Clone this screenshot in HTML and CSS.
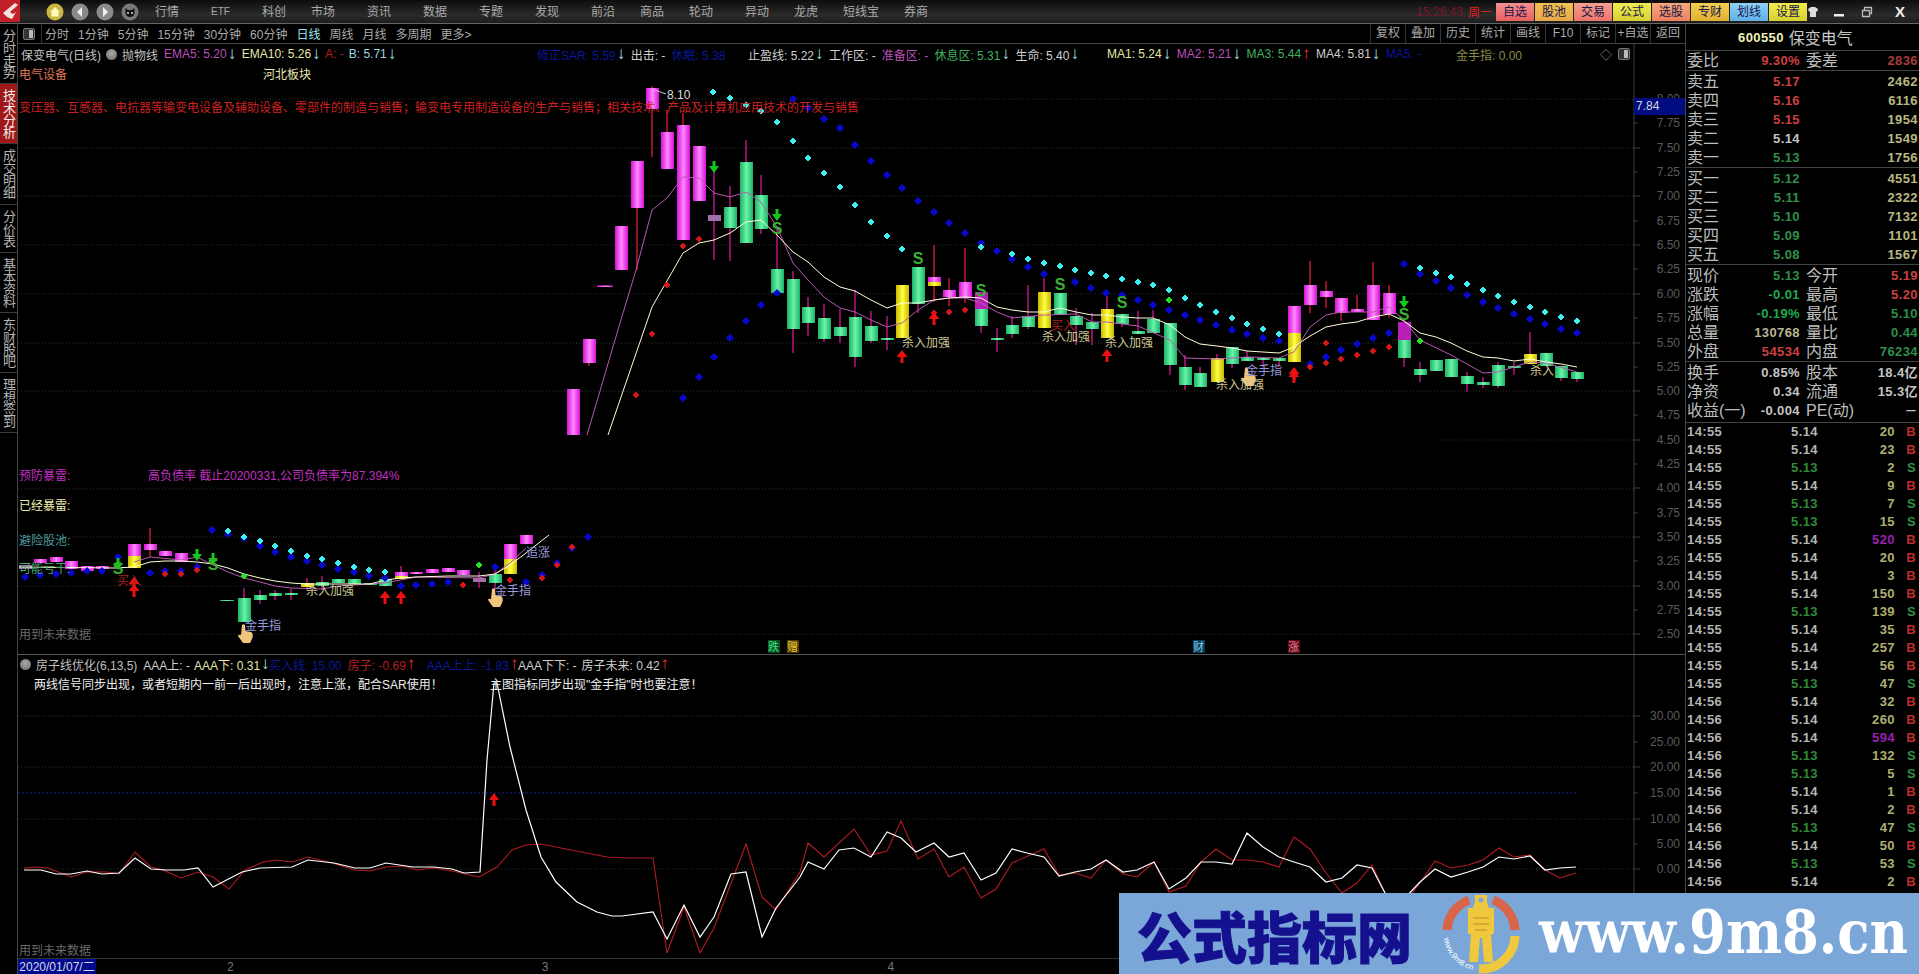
FILE: index.html
```html
<!DOCTYPE html>
<html lang="zh-CN">
<head>
<meta charset="utf-8">
<title>保变电气 日线</title>
<link rel="stylesheet" href="styles.css">
</head>
<body>
<div class="app">
  <header class="topbar">
    <svg class="logo" viewBox="0 0 20 22" width="20" height="22"><rect width="20" height="22" fill="#c4202a"/><path d="M3 13 L15 3 L18 5 L10 12 L13 14 L16 12 L12 19 L7 17 Z" fill="#f4e4e0"/></svg>
    <div class="navbtns">
      <svg viewBox="0 0 18 18" width="18" height="18"><circle cx="9" cy="9" r="8.5" fill="#c8b840"/><path d="M9 4 L14 9 H12.5 V13.500 H5.500 V9 H4 Z" fill="#fff8c0"/></svg>
      <svg viewBox="0 0 18 18" width="18" height="18"><circle cx="9" cy="9" r="8.500" fill="#8a8a8a"/><path d="M11 4 L6 9 L11 14 Z" fill="#f0f0f0"/></svg>
      <svg viewBox="0 0 18 18" width="18" height="18"><circle cx="9" cy="9" r="8.500" fill="#8a8a8a"/><path d="M7 4 L12 9 L7 14 Z" fill="#f0f0f0"/></svg>
      <svg viewBox="0 0 18 18" width="18" height="18"><circle cx="9" cy="9" r="8.500" fill="#7a7a7a"/><path d="M4.500 5 L7 7 H11 L13.500 5 V10 Q13 14 9 14 Q5 14 4.500 10 Z" fill="#111"/><circle cx="7" cy="10" r="1" fill="#ddd"/><circle cx="11" cy="10" r="1" fill="#ddd"/></svg>
    </div>
    <nav class="menu">
      <span class="mi">行情</span><span class="mi etf wide">ETF</span><span class="mi wide">科创</span><span class="mi">市场</span><span class="mi wide">资讯</span><span class="mi wide">数据</span><span class="mi wide">专题</span><span class="mi wide">发现</span><span class="mi wide">前沿</span><span class="mi">商品</span><span class="mi">轮动</span><span class="mi wide">异动</span><span class="mi">龙虎</span><span class="mi">短线宝</span><span class="mi">券商</span>
    </nav>
    <div class="topright">
      <span class="clock">15:26:43</span><span class="week">周一</span>
      <div class="qbtns">
        <span class="qb q1">自选</span><span class="qb q2">股池</span><span class="qb q3">交易</span><span class="qb q4">公式</span><span class="qb q5">选股</span><span class="qb q6">专财</span><span class="qb q7">划线</span><span class="qb q4">设置</span>
      </div>
      <div class="winbtns">
        <svg viewBox="0 0 12 12" width="12" height="12"><path d="M1 3 L4 1 H8 L11 3 L10 6 L9 5 V11 H3 V5 L2 6 Z" fill="#ddd"/></svg>
        <svg class="wmin" viewBox="0 0 12 12" width="12" height="12"><rect x="1" y="8" width="10" height="2.500" fill="#eee"/></svg>
        <svg viewBox="0 0 12 12" width="12" height="12"><path d="M1.500 4.500 H8.500 V10.500 H1.500 Z M3.500 4.500 V1.500 H10.500 V7.500 H8.500" fill="none" stroke="#bbb" stroke-width="1.300"/></svg>
        <span class="xbtn">X</span>
      </div>
    </div>
  </header>

  <div class="main">
    <aside class="sidetabs">
      <div class="vtab">分时走势</div>
      <div class="vtab on">技术分析</div>
      <div class="vtab">成交明细</div>
      <div class="vtab">分价表</div>
      <div class="vtab">基本资料</div>
      <div class="vtab">东财股吧</div>
      <div class="vtab">理想签到</div>
    </aside>

    <section class="center">
      <div class="periodbar">
        <svg class="panelicon" viewBox="0 0 12 12" width="12" height="12"><rect x=".5" y=".5" width="11" height="11" rx="1.500" fill="#333" stroke="#777"/><rect x="6" y="2" width="4" height="8" fill="#bbb"/></svg>
        <div class="ptabs">
          <span>分时</span><span>1分钟</span><span>5分钟</span><span>15分钟</span><span>30分钟</span><span>60分钟</span><span class="cur">日线</span><span>周线</span><span>月线</span><span>多周期</span><span>更多&gt;</span>
        </div>
        <div class="tools">
          <span>复权</span><span>叠加</span><span>历史</span><span>统计</span><span>画线</span><span>F10</span><span>标记</span><span>+自选</span><span>返回</span>
        </div>
      </div>

      <div class="pane pane-main">
        <svg class="canvas" viewBox="18 44 1667 610" width="1667" height="610">
          <defs>
            <linearGradient id="gu"><stop offset="0" stop-color="#d810d8"/><stop offset=".5" stop-color="#ff88ff"/><stop offset="1" stop-color="#d810d8"/></linearGradient>
            <linearGradient id="gd"><stop offset="0" stop-color="#1cb468"/><stop offset=".5" stop-color="#68f4a8"/><stop offset="1" stop-color="#1cb468"/></linearGradient>
            <linearGradient id="gy"><stop offset="0" stop-color="#c8b800"/><stop offset=".5" stop-color="#ffff40"/><stop offset="1" stop-color="#c8b800"/></linearGradient>
            <path id="adown" d="M-1.500 -7 V-2 H-5 L0 5 L5 -2 H1.500 V-7 Z"/>
            <path id="aup" d="M-1.500 7 V1 H-5.500 L0 -6 L5.500 1 H1.500 V7 Z"/>
            <path id="hand" d="M-3 -9 Q-1.500 -10.500 0 -9 L.5 -3 L6 -2 Q9 0 7 5 L5 9 H-2 L-7 2 Q-7 0 -4 1 Z"/>
          </defs>
          <g class="grid">
            <path d="M18 99H1634M18 148H1634M18 196H1634M18 245H1634M18 294H1634M18 343H1634M18 391H1634M1440 440H1634M18 489H1634M18 537H1634M18 586H1634M18 634H1634"/>
          </g>
          <path class="axisline" d="M1634 44V654M1634 99h6M1634 123h4M1634 148h6M1634 172h4M1634 196h6M1634 221h4M1634 245h6M1634 269h4M1634 294h6M1634 318h4M1634 343h6M1634 367h4M1634 391h6M1634 415h4M1634 440h6M1634 464h4M1634 488h6M1634 513h4M1634 537h6M1634 561h4M1634 586h6M1634 610h4M1634 634h6"/>
          <g class="axtext">
            <text x="1680" y="103">8.00</text><text x="1680" y="127">7.75</text><text x="1680" y="152">7.50</text><text x="1680" y="176">7.25</text><text x="1680" y="200">7.00</text><text x="1680" y="225">6.75</text><text x="1680" y="249">6.50</text><text x="1680" y="273">6.25</text><text x="1680" y="298">6.00</text><text x="1680" y="322">5.75</text><text x="1680" y="347">5.50</text><text x="1680" y="371">5.25</text><text x="1680" y="395">5.00</text><text x="1680" y="419">4.75</text><text x="1680" y="444">4.50</text><text x="1680" y="468">4.25</text><text x="1680" y="492">4.00</text><text x="1680" y="517">3.75</text><text x="1680" y="541">3.50</text><text x="1680" y="565">3.25</text><text x="1680" y="590">3.00</text><text x="1680" y="614">2.75</text><text x="1680" y="638">2.50</text>
          </g>

          <path class="wick-up" d="M589 339V366M637 208V270M652 86V157M667 110V132M683 113V125M934 245V302M949 278V306M965 248V303M1310 261V313M1326 281V308M1341 298V321M1357 295V309M1373 262V285M1389 285V318M150 528V557"/>
          <path class="wick-dn" d="M714 167V260M730 186V261M746 140V162M761 175V234M777 227V269M793 271V353M808 297V336M824 304V342M840 309V343M855 290V367M871 311V343M887 316V350M918 304V313M981 333V292M997 328V352M1012 316V338M1028 285V329M1044 278V292M1076 308V345M1092 313V345M1107 296V309M1122 324V327M1138 311V334M1153 310V319M1170 365V375M1185 355V390M1200 367V373M1217 354V358M1232 364V368M1247 351V357M1263 360V367M1279 361V367M1404 358V367M1420 362V382M1467 372V392M1483 377V388M1498 362V388M1514 362V375M1530 332V354M1561 378V381M1577 379V382M244 588V622M260 590V604M275 590V600M291 589V600M307 578V590M479 572V588M495 570V590M322 576V590M401 566V572"/>

          <g fill="url(#gu)">
            <rect x="567" y="389" width="13" height="46"/><rect x="583" y="339" width="13" height="24"/><rect x="597" y="285.500" width="16" height="1.500"/><rect x="615" y="226" width="13" height="44"/><rect x="631" y="161" width="13" height="47"/><rect x="646" y="88" width="13" height="21"/><rect x="661" y="132" width="13" height="37"/><rect x="677" y="125" width="13" height="115"/><rect x="693" y="146" width="13" height="55"/><rect x="928" y="277" width="13" height="5"/><rect x="943" y="290" width="13" height="7"/><rect x="959" y="282" width="13" height="16"/><rect x="1288" y="306" width="13" height="27"/><rect x="1304" y="285" width="13" height="20"/><rect x="1320" y="291" width="13" height="6"/><rect x="1335" y="298" width="13" height="15"/><rect x="1351" y="309" width="13" height="3"/><rect x="1367" y="285" width="13" height="35"/><rect x="1383" y="293" width="13" height="21"/>
            <rect x="34" y="559" width="13" height="4"/><rect x="50" y="557" width="13" height="5"/><rect x="65" y="561" width="13" height="8"/><rect x="81" y="566" width="13" height="5"/><rect x="96" y="566" width="13" height="3"/><rect x="128" y="544" width="13" height="12"/><rect x="144" y="544" width="13" height="6"/><rect x="159" y="551" width="13" height="5"/><rect x="175" y="553" width="13" height="9"/><rect x="395" y="572" width="13" height="4"/><rect x="410" y="572" width="13" height="2"/><rect x="426" y="569" width="13" height="4"/><rect x="442" y="568" width="13" height="4"/><rect x="457" y="570" width="13" height="5"/><rect x="504" y="544" width="13" height="15"/><rect x="520" y="535" width="13" height="9"/>
          </g>
          <g class="purple-body">
            <rect x="975" y="292" width="13" height="17"/><rect x="1398" y="322" width="13" height="18"/>
          </g>
          <g fill="url(#gd)">
            <rect x="724" y="207" width="13" height="21"/><rect x="740" y="162" width="13" height="81"/><rect x="755" y="195" width="13" height="34"/><rect x="771" y="269" width="13" height="24"/><rect x="787" y="279" width="13" height="50"/><rect x="802" y="307" width="13" height="16"/><rect x="818" y="318" width="13" height="21"/><rect x="834" y="327" width="13" height="9"/><rect x="849" y="317" width="13" height="40"/><rect x="865" y="326" width="13" height="15"/><rect x="881" y="338" width="13" height="2"/><rect x="912" y="267" width="13" height="37"/><rect x="975" y="309" width="13" height="17"/><rect x="991" y="338" width="13" height="2"/><rect x="1006" y="325" width="13" height="9"/><rect x="1022" y="316" width="13" height="11"/><rect x="1054" y="293" width="13" height="22"/><rect x="1070" y="316" width="13" height="9"/><rect x="1086" y="322" width="13" height="7"/><rect x="1116" y="314" width="13" height="10"/><rect x="1132" y="331" width="13" height="3"/><rect x="1147" y="319" width="13" height="14"/><rect x="1164" y="323" width="13" height="42"/><rect x="1179" y="367" width="13" height="18"/><rect x="1194" y="373" width="13" height="14"/><rect x="1226" y="347" width="13" height="17"/><rect x="1241" y="357" width="13" height="4"/><rect x="1257" y="358" width="13" height="2"/><rect x="1273" y="358" width="13" height="3"/><rect x="1398" y="340" width="13" height="18"/><rect x="1414" y="369" width="13" height="6"/><rect x="1430" y="360" width="13" height="11"/><rect x="1445" y="359" width="13" height="18"/><rect x="1461" y="376" width="13" height="8"/><rect x="1477" y="382" width="13" height="3"/><rect x="1492" y="365" width="13" height="21"/><rect x="1508" y="366" width="13" height="2"/><rect x="1540" y="353" width="13" height="13"/><rect x="1555" y="366" width="13" height="12"/><rect x="1571" y="372" width="13" height="7"/>
            <rect x="238" y="598" width="13" height="24"/><rect x="254" y="595" width="13" height="5"/><rect x="269" y="593" width="13" height="3"/><rect x="285" y="593" width="13" height="2"/><rect x="220" y="600" width="14" height="1"/><rect x="316" y="582" width="13" height="4"/><rect x="332" y="579" width="13" height="4"/><rect x="348" y="579" width="13" height="5"/><rect x="364" y="583" width="13" height="2"/><rect x="379" y="579" width="13" height="7"/><rect x="489" y="574" width="13" height="9"/>
          </g>
          <g fill="url(#gy)">
            <rect x="896" y="285" width="13" height="53"/><rect x="1038" y="292" width="13" height="36"/><rect x="1101" y="309" width="13" height="29"/><rect x="1211" y="358" width="13" height="24"/><rect x="1288" y="333" width="13" height="29"/><rect x="1524" y="354" width="13" height="10"/><rect x="128" y="556" width="13" height="12"/><rect x="504" y="559" width="13" height="15"/><rect x="301" y="583" width="13" height="4"/><rect x="928" y="282" width="13" height="4"/><rect x="395" y="576" width="13" height="3"/>
          </g>
          <g class="gray-body">
            <rect x="708" y="215" width="13" height="6"/><rect x="473" y="578" width="13" height="4"/><rect x="19" y="565" width="13" height="4"/>
          </g>

          <polyline class="ma-pink" points="587,435 620,323 636,270 652,210 667,198 683,177 699,178 714,193 730,197 746,192 761,202 777,227 793,263 808,280 824,297 840,308 855,312 871,320 887,327 902,323 918,310 934,300 949,298 965,298 981,303 997,312 1012,318 1044,315 1076,314 1092,322 1107,322 1138,326 1170,340 1185,358 1217,359 1247,357 1279,358 1294,352 1310,327 1326,315 1341,312 1373,312 1389,307 1404,320 1420,340 1451,355 1483,373 1498,372 1514,367 1530,362 1546,363 1577,372"/>
          <polyline class="ma-white" points="608,435 620,400 652,307 683,253 699,243 714,240 730,233 746,222 761,220 777,235 793,252 808,262 824,277 840,287 855,291 871,300 887,308 902,303 918,303 934,300 949,298 965,297 981,298 997,307 1012,310 1028,312 1044,312 1060,308 1076,312 1092,315 1107,315 1122,317 1138,318 1153,318 1170,325 1185,337 1200,344 1217,346 1232,348 1247,351 1263,352 1279,353 1294,347 1301,342 1310,336 1326,327 1341,324 1357,322 1373,317 1389,314 1404,321 1420,333 1436,337 1451,343 1467,351 1483,357 1498,358 1514,361 1530,359 1546,362 1561,364 1577,367"/>
          <polyline class="ma-pink" points="134,562 150,557 181,560 197,557 213,565 228,572 244,578 260,582 275,586 291,588 322,589 338,586 385,583 416,577 479,578 495,574 510,563 526,548"/>
          <polyline class="ma-white" points="19,567 115,568 134,567 150,562 165,561 181,561 197,562 213,564 228,568 244,574 260,578 275,581 291,583 307,584 338,584 370,584 385,580 401,578 416,577 448,576 479,576 495,574 510,565 526,553 549,535"/>

          <g class="dot-blue">
            <path d="M683 395l3 3-3 3-3-3zM699 374l3 3-3 3-3-3zM714 354l3 3-3 3-3-3zM730 335l3 3-3 3-3-3zM746 318l3 3-3 3-3-3zM761 302l3 3-3 3-3-3zM777 290l3 3-3 3-3-3zM793 96l3 3-3 3-3-3zM808 105l3 3-3 3-3-3zM824 116l3 3-3 3-3-3zM840 125l3 3-3 3-3-3zM855 142l3 3-3 3-3-3zM871 158l3 3-3 3-3-3zM887 172l3 3-3 3-3-3zM902 185l3 3-3 3-3-3zM918 198l3 3-3 3-3-3zM934 209l3 3-3 3-3-3zM949 220l3 3-3 3-3-3zM965 230l3 3-3 3-3-3zM981 240l3 3-3 3-3-3zM997 248l3 3-3 3-3-3zM1012 256l3 3-3 3-3-3zM1028 264l3 3-3 3-3-3zM1044 271l3 3-3 3-3-3zM1075 279l3 3-3 3-3-3zM1091 285l3 3-3 3-3-3zM1106 290l3 3-3 3-3-3zM1122 292l3 3-3 3-3-3zM1138 297l3 3-3 3-3-3zM1153 302l3 3-3 3-3-3zM1169 307l3 3-3 3-3-3zM1185 312l3 3-3 3-3-3zM1200 317l3 3-3 3-3-3zM1216 322l3 3-3 3-3-3zM1232 327l3 3-3 3-3-3zM1247 331l3 3-3 3-3-3zM1263 335l3 3-3 3-3-3zM1279 338l3 3-3 3-3-3zM1310 361l3 3-3 3-3-3zM1326 354l3 3-3 3-3-3zM1341 347l3 3-3 3-3-3zM1357 341l3 3-3 3-3-3zM1373 335l3 3-3 3-3-3zM1389 330l3 3-3 3-3-3zM1404 261l3 3-3 3-3-3zM1420 271l3 3-3 3-3-3zM1436 278l3 3-3 3-3-3zM1451 285l3 3-3 3-3-3zM1467 292l3 3-3 3-3-3zM1483 299l3 3-3 3-3-3zM1498 305l3 3-3 3-3-3zM1514 311l3 3-3 3-3-3zM1530 316l3 3-3 3-3-3zM1545 321l3 3-3 3-3-3zM1561 326l3 3-3 3-3-3zM1577 330l3 3-3 3-3-3z"/>
            <path d="M25 574l3 3-3 3-3-3zM40 572l3 3-3 3-3-3zM56 571l3 3-3 3-3-3zM71 570l3 3-3 3-3-3zM87 568l3 3-3 3-3-3zM102 568l3 3-3 3-3-3zM118 554l3 3-3 3-3-3zM150 570l3 3-3 3-3-3zM165 568l3 3-3 3-3-3zM181 568l3 3-3 3-3-3zM197 564l3 3-3 3-3-3zM212 527l3 3-3 3-3-3zM228 531l3 3-3 3-3-3zM244 535l3 3-3 3-3-3zM260 543l3 3-3 3-3-3zM275 549l3 3-3 3-3-3zM291 554l3 3-3 3-3-3zM307 558l3 3-3 3-3-3zM322 562l3 3-3 3-3-3zM338 566l3 3-3 3-3-3zM354 569l3 3-3 3-3-3zM369 573l3 3-3 3-3-3zM385 575l3 3-3 3-3-3zM401 583l3 3-3 3-3-3zM416 582l3 3-3 3-3-3zM432 581l3 3-3 3-3-3zM448 579l3 3-3 3-3-3zM495 564l3 3-3 3-3-3zM526 579l3 3-3 3-3-3zM542 572l3 3-3 3-3-3zM557 560l3 3-3 3-3-3zM572 545l3 3-3 3-3-3zM588 534l3 3-3 3-3-3z"/>
          </g>
          <path class="dot-cyan" d="M713 89l3 3-3 3-3-3zM730 95l3 3-3 3-3-3zM746 102l3 3-3 3-3-3zM761 108l3 3-3 3-3-3zM777 119l3 3-3 3-3-3zM793 138l3 3-3 3-3-3zM808 155l3 3-3 3-3-3zM824 170l3 3-3 3-3-3zM840 184l3 3-3 3-3-3zM855 202l3 3-3 3-3-3zM871 219l3 3-3 3-3-3zM887 233l3 3-3 3-3-3zM902 246l3 3-3 3-3-3zM981 244l3 3-3 3-3-3zM1012 251l3 3-3 3-3-3zM1028 256l3 3-3 3-3-3zM1044 260l3 3-3 3-3-3zM1060 263l3 3-3 3-3-3zM1075 267l3 3-3 3-3-3zM1091 270l3 3-3 3-3-3zM1106 273l3 3-3 3-3-3zM1122 276l3 3-3 3-3-3zM1138 279l3 3-3 3-3-3zM1153 282l3 3-3 3-3-3zM1169 287l3 3-3 3-3-3zM1185 295l3 3-3 3-3-3zM1200 302l3 3-3 3-3-3zM1216 309l3 3-3 3-3-3zM1232 315l3 3-3 3-3-3zM1247 321l3 3-3 3-3-3zM1263 326l3 3-3 3-3-3zM1279 331l3 3-3 3-3-3zM1420 265l3 3-3 3-3-3zM1436 270l3 3-3 3-3-3zM1451 274l3 3-3 3-3-3zM1467 281l3 3-3 3-3-3zM1483 287l3 3-3 3-3-3zM1498 293l3 3-3 3-3-3zM1514 299l3 3-3 3-3-3zM1530 304l3 3-3 3-3-3zM1545 309l3 3-3 3-3-3zM1561 314l3 3-3 3-3-3zM1577 318l3 3-3 3-3-3zM228 528l3 3-3 3-3-3zM244 534l3 3-3 3-3-3zM260 538l3 3-3 3-3-3zM275 543l3 3-3 3-3-3zM291 548l3 3-3 3-3-3zM307 553l3 3-3 3-3-3zM322 556l3 3-3 3-3-3zM338 560l3 3-3 3-3-3zM354 564l3 3-3 3-3-3zM369 567l3 3-3 3-3-3zM385 569l3 3-3 3-3-3z"/>
          <path class="dot-red" d="M636 392l3 3-3 3-3-3zM652 331l3 3-3 3-3-3zM667 282l3 3-3 3-3-3zM683 243l3 3-3 3-3-3zM699 236l3 3-3 3-3-3zM934 310l3 3-3 3-3-3zM949 309l3 3-3 3-3-3zM965 307l3 3-3 3-3-3zM1310 364l3 3-3 3-3-3zM1326 360l3 3-3 3-3-3zM1341 356l3 3-3 3-3-3zM1357 352l3 3-3 3-3-3zM1373 348l3 3-3 3-3-3zM1389 344l3 3-3 3-3-3zM1326 340l3 3-3 3-3-3zM165 571l3 3-3 3-3-3zM181 571l3 3-3 3-3-3zM197 567l3 3-3 3-3-3zM463 582l3 3-3 3-3-3zM510 577l3 3-3 3-3-3zM542 575l3 3-3 3-3-3zM557 562l3 3-3 3-3-3zM572 544l3 3-3 3-3-3z"/>
          <path class="dot-green" d="M1169 297l3 3-3 3-3-3zM1420 338l3 3-3 3-3-3zM244 573l3 3-3 3-3-3zM479 562l3 3-3 3-3-3z"/>

          <g class="arrow-green">
            <use href="#adown" x="714" y="168"/><use href="#adown" x="777" y="216"/><use href="#adown" x="1404" y="303"/><use href="#adown" x="197" y="556"/><use href="#adown" x="213" y="560"/><use href="#adown" x="118" y="565"/>
          </g>
          <g class="arrow-red">
            <use href="#aup" x="902" y="356"/><use href="#aup" x="934" y="318"/><use href="#aup" x="1107" y="355"/><use href="#aup" x="1294" y="373"/><use href="#aup" x="1294" y="376"/><use href="#aup" x="134" y="583"/><use href="#aup" x="134" y="590"/><use href="#aup" x="385" y="597"/><use href="#aup" x="401" y="597"/>
          </g>
          <g class="sig-s">
            <text x="777" y="234">S</text><text x="918" y="264">S</text><text x="981" y="296">S</text><text x="1060" y="290">S</text><text x="1122" y="308">S</text><text x="1404" y="320">S</text><text x="118" y="574">S</text><text x="213" y="570">S</text>
          </g>
          <g class="hand-ico">
            <use href="#hand" x="245" y="634"/><use href="#hand" x="495" y="598"/><use href="#hand" x="1248" y="377"/>
          </g>

          <text class="peak" x="667" y="99">8.10</text>
          <path class="peakline" d="M655 90L666 94"/>
          <g class="tag-sell">
            <text x="902" y="347">杀入加强</text><text x="1105" y="347">杀入加强</text><text x="1216" y="389">杀入加强</text><text x="1042" y="341">杀入加强</text><text x="306" y="595">杀入加强</text><text x="1530" y="375">杀入</text>
          </g>
          <g class="tag-gold">
            <text x="1246" y="375">金手指</text><text x="495" y="595">金手指</text><text x="245" y="630">金手指</text><text x="526" y="557">追涨</text>
          </g>
          <text class="tag-buy" x="117" y="585">买入</text>
          <text class="tag-buy" x="1051" y="330">买入</text>

          <text class="lbl-purple" x="19" y="480">预防暴雷:</text>
          <text class="lbl-purple" x="148" y="480">高负债率 截止20200331,公司负债率为87.394%</text>
          <text class="lbl-yellow" x="19" y="510">已经暴雷:</text>
          <text class="lbl-teal" x="19" y="545">避险股池:</text>
          <text class="lbl-teal2" x="19" y="573">可能亏干:</text>
          <text class="lbl-gray" x="19" y="639">用到未来数据</text>

          <rect class="mk" x="768" y="640" width="12" height="13" fill="#0a4a20"/><text class="mk-t g" x="768" y="651">跌</text>
          <rect class="mk" x="787" y="640" width="12" height="13" fill="#4a3a00"/><text class="mk-t y" x="787" y="651">赠</text>
          <rect class="mk" x="1193" y="640" width="12" height="13" fill="#0a3a5a"/><text class="mk-t b" x="1193" y="651">财</text>
          <rect class="mk" x="1288" y="640" width="12" height="13" fill="#5a0a1a"/><text class="mk-t r" x="1288" y="651">涨</text>
        </svg>

        <div class="pricetag">7.84</div>

        <div class="inforow">
          <div class="seg seg-a">
            <span class="it title">保变电气(日线)</span><i class="dotbtn"></i><span class="it title">抛物线</span>
            <span class="it c-pur ml6">EMA5: 5.20</span><b class="dn">↓</b>
            <span class="it c-yel ml6">EMA10: 5.26</span><b class="dn">↓</b>
            <span class="it c-red ml5">A: -</span>
            <span class="it c-cya ml5">B: 5.71</span><b class="dn">↓</b>
          </div>
          <div class="seg seg-b">
            <span class="it c-blu">修正SAR: 5.59</span><b class="dn">↓</b>
            <span class="it c-whi ml6">出击: -</span>
            <span class="it c-blu ml6">休眠: 5.38</span>
          </div>
          <div class="seg seg-c">
            <span class="it c-whi">止盈线: 5.22</span><b class="dn">↓</b>
            <span class="it c-whi ml6">工作区: -</span>
            <span class="it c-pur ml6">准备区: -</span>
            <span class="it c-grn ml6">休息区: 5.31</span><b class="dn">↓</b>
            <span class="it c-whi ml6">生命: 5.40</span><b class="dn">↓</b>
          </div>
          <div class="seg seg-d">
            <span class="it c-yel">MA1: 5.24</span><b class="dn">↓</b>
            <span class="it c-pur ml6">MA2: 5.21</span><b class="dn">↓</b>
            <span class="it c-grn ml6">MA3: 5.44</span><b class="up">↑</b>
            <span class="it c-whi ml6">MA4: 5.81</span><b class="dn">↓</b>
            <span class="it c-blu ml6">MA5: -</span>
          </div>
          <div class="seg seg-e">
            <span class="it c-kha">金手指: 0.00</span>
          </div>
          <div class="seg seg-f">
            <span class="diamond">◇</span>
            <svg viewBox="0 0 12 12" width="12" height="12"><rect x=".5" y=".5" width="11" height="11" rx="1.500" fill="#333" stroke="#777"/><rect x="6" y="2" width="4" height="8" fill="#bbb"/></svg>
          </div>
        </div>
        <div class="textrow">
          <span class="sector">电气设备</span><span class="region">河北板块</span>
        </div>
        <div class="bizline">变压器、互感器、电抗器等输变电设备及辅助设备、零部件的制造与销售；输变电专用制造设备的生产与销售；相关技术、产品及计算机应用技术的开发与销售</div>
      </div>

      <div class="pane pane-sub">
        <svg class="canvas" viewBox="18 655 1667 303" width="1667" height="303">
          <g class="grid"><path d="M18 716H1634M18 767H1634M18 819H1634M18 869H1634"/></g>
          <path class="blue-dots" d="M18 793H1576"/>
          <path class="axisline" d="M1634 655V958M1634 716h6M1634 742h4M1634 767h6M1634 793h4M1634 819h6M1634 844h4M1634 869h6"/>
          <g class="axtext">
            <text x="1680" y="720">30.00</text><text x="1680" y="746">25.00</text><text x="1680" y="771">20.00</text><text x="1680" y="797">15.00</text><text x="1680" y="823">10.00</text><text x="1680" y="848">5.00</text><text x="1680" y="873">0.00</text>
          </g>
          <polyline class="ln-red" points="24,868 36,867 48,868 71,877 87,872 107,872 119,874 135,852 151,867 163,870 181,878 198,872 213,877 229,889 245,870 263,862 276,860 292,862 308,857 332,863 355,870 370,871 386,867 403,866 417,870 434,868 452,871 479,877 497,867 512,850 526,845 541,844 566,849 607,857 628,858 653,858 667,953 684,907 700,953 714,928 746,844 762,897 776,910 800,872 808,843 824,857 854,829 871,855 887,851 901,821 918,859 934,849 949,877 964,867 981,898 996,889 1012,863 1044,849 1059,875 1075,873 1091,878 1106,860 1123,874 1137,877 1154,862 1169,892 1186,886 1201,862 1216,849 1232,860 1247,860 1263,862 1279,867 1294,837 1310,849 1326,873 1342,893 1357,883 1372,865 1386,895 1403,905 1420,883 1435,861 1451,868 1468,865 1483,860 1499,848 1514,857 1530,855 1545,870 1560,878 1576,873"/>
          <polyline class="ln-white" points="24,870 41,870 56,874 71,874 87,871 102,874 119,873 135,858 151,869 166,870 184,870 198,868 213,887 242,872 260,868 292,867 308,860 334,863 355,868 370,868 386,863 413,867 434,867 452,869 464,873 480,872 487,760 494,683 497,683 510,747 526,810 541,857 556,882 577,902 597,912 612,916 622,916 653,912 667,939 684,905 700,937 714,917 731,874 746,872 762,937 776,908 800,877 808,862 824,869 839,850 854,848 871,857 887,832 901,838 916,852 934,843 949,857 964,853 981,880 996,873 1012,849 1027,853 1044,857 1059,876 1075,872 1091,869 1106,860 1123,872 1137,870 1154,862 1169,889 1186,878 1201,862 1216,862 1232,864 1247,833 1263,847 1279,857 1294,862 1310,867 1326,882 1342,878 1357,865 1372,868 1386,895 1403,900 1420,882 1435,869 1451,877 1468,872 1483,867 1499,857 1514,859 1530,856 1545,870 1560,868 1576,867"/>
          <g class="arrow-red"><path d="M494 793 L499 800 H495.500 V806 H492.500 V800 H489 Z"/></g>
          <text class="lbl-gray" x="19" y="955">用到未来数据</text>
        </svg>
        <div class="inforow sub">
          <i class="dotbtn first"></i><span class="it title">房子线优化(6,13,5)</span>
          <span class="it c-whi ml6">AAA上: -</span>
          <span class="it c-yel ml4">AAA下: 0.31</span><b class="dn">↓</b>
          <span class="it c-blu ml0">买入线: 15.00</span>
          <span class="it c-red ml6">房子: -0.69</span><b class="up">↑</b>
          <span class="it c-blu ml12">AAA上上: -1.83</span><b class="up">↑</b>
          <span class="it c-whi ml0">AAA下下: -</span>
          <span class="it c-whi ml5">房子未来: 0.42</span><b class="up">↑</b>
        </div>
        <div class="noterow">
          <span class="note1">两线信号同步出现，或者短期内一前一后出现时，注意上涨，配合SAR使用！</span>
          <span class="note2">主图指标同步出现"金手指"时也要注意！</span>
        </div>
      </div>

      <div class="timeaxis">
        <span class="date">2020/01/07/二</span><span class="tick t2">2</span><span class="tick t3">3</span><span class="tick t4">4</span>
      </div>
    </section>

    <aside class="quote">
      <div class="qhead"><b>600550</b><span>保变电气</span></div>
      <div class="sec one">
        <div class="qrow"><span class="lab">委比</span><span class="val red">9.30%</span><span class="lab">委差</span><span class="val red dim">2836</span></div>
      </div>
      <div class="sec five">
        <div class="prow"><span class="lab">卖五</span><span class="val red">5.17</span><span class="vol">2462</span></div>
        <div class="prow"><span class="lab">卖四</span><span class="val red">5.16</span><span class="vol">6116</span></div>
        <div class="prow"><span class="lab">卖三</span><span class="val red">5.15</span><span class="vol">1954</span></div>
        <div class="prow"><span class="lab">卖二</span><span class="val">5.14</span><span class="vol">1549</span></div>
        <div class="prow"><span class="lab">卖一</span><span class="val grn">5.13</span><span class="vol">1756</span></div>
      </div>
      <div class="sec five">
        <div class="prow"><span class="lab">买一</span><span class="val grn">5.12</span><span class="vol">4551</span></div>
        <div class="prow"><span class="lab">买二</span><span class="val grn">5.11</span><span class="vol">2322</span></div>
        <div class="prow"><span class="lab">买三</span><span class="val grn">5.10</span><span class="vol">7132</span></div>
        <div class="prow"><span class="lab">买四</span><span class="val grn">5.09</span><span class="vol">1101</span></div>
        <div class="prow"><span class="lab">买五</span><span class="val grn">5.08</span><span class="vol">1567</span></div>
      </div>
      <div class="sec five">
        <div class="qrow"><span class="lab">现价</span><span class="val grn">5.13</span><span class="lab">今开</span><span class="val red">5.19</span></div>
        <div class="qrow"><span class="lab">涨跌</span><span class="val grn2">-0.01</span><span class="lab">最高</span><span class="val red">5.20</span></div>
        <div class="qrow"><span class="lab">涨幅</span><span class="val grn2">-0.19%</span><span class="lab">最低</span><span class="val grn">5.10</span></div>
        <div class="qrow"><span class="lab">总量</span><span class="val vol">130768</span><span class="lab">量比</span><span class="val grn">0.44</span></div>
        <div class="qrow"><span class="lab">外盘</span><span class="val red">54534</span><span class="lab">内盘</span><span class="val grn">76234</span></div>
      </div>
      <div class="sec three">
        <div class="qrow"><span class="lab">换手</span><span class="val">0.85%</span><span class="lab">股本</span><span class="val">18.4亿</span></div>
        <div class="qrow"><span class="lab">净资</span><span class="val">0.34</span><span class="lab">流通</span><span class="val">15.3亿</span></div>
        <div class="qrow"><span class="lab">收益(一)</span><span class="val">-0.004</span><span class="lab">PE(动)</span><span class="val">－</span></div>
      </div>
      <div class="trades">
        <div class="trow"><span>14:55</span><span>5.14</span><span class="v">20</span><span class="b">B</span></div>
        <div class="trow"><span>14:55</span><span>5.14</span><span class="v">23</span><span class="b">B</span></div>
        <div class="trow"><span>14:55</span><span class="p">5.13</span><span class="v">2</span><span class="s">S</span></div>
        <div class="trow"><span>14:55</span><span>5.14</span><span class="v">9</span><span class="b">B</span></div>
        <div class="trow"><span>14:55</span><span class="p">5.13</span><span class="v">7</span><span class="s">S</span></div>
        <div class="trow"><span>14:55</span><span class="p">5.13</span><span class="v">15</span><span class="s">S</span></div>
        <div class="trow"><span>14:55</span><span>5.14</span><span class="v big">520</span><span class="b">B</span></div>
        <div class="trow"><span>14:55</span><span>5.14</span><span class="v">20</span><span class="b">B</span></div>
        <div class="trow"><span>14:55</span><span>5.14</span><span class="v">3</span><span class="b">B</span></div>
        <div class="trow"><span>14:55</span><span>5.14</span><span class="v">150</span><span class="b">B</span></div>
        <div class="trow"><span>14:55</span><span class="p">5.13</span><span class="v">139</span><span class="s">S</span></div>
        <div class="trow"><span>14:55</span><span>5.14</span><span class="v">35</span><span class="b">B</span></div>
        <div class="trow"><span>14:55</span><span>5.14</span><span class="v">257</span><span class="b">B</span></div>
        <div class="trow"><span>14:55</span><span>5.14</span><span class="v">56</span><span class="b">B</span></div>
        <div class="trow"><span>14:55</span><span class="p">5.13</span><span class="v">47</span><span class="s">S</span></div>
        <div class="trow"><span>14:56</span><span>5.14</span><span class="v">32</span><span class="b">B</span></div>
        <div class="trow"><span>14:56</span><span>5.14</span><span class="v">260</span><span class="b">B</span></div>
        <div class="trow"><span>14:56</span><span>5.14</span><span class="v big">594</span><span class="b">B</span></div>
        <div class="trow"><span>14:56</span><span class="p">5.13</span><span class="v">132</span><span class="s">S</span></div>
        <div class="trow"><span>14:56</span><span class="p">5.13</span><span class="v">5</span><span class="s">S</span></div>
        <div class="trow"><span>14:56</span><span>5.14</span><span class="v">1</span><span class="b">B</span></div>
        <div class="trow"><span>14:56</span><span>5.14</span><span class="v">2</span><span class="b">B</span></div>
        <div class="trow"><span>14:56</span><span class="p">5.13</span><span class="v">47</span><span class="s">S</span></div>
        <div class="trow"><span>14:56</span><span>5.14</span><span class="v">50</span><span class="b">B</span></div>
        <div class="trow"><span>14:56</span><span class="p">5.13</span><span class="v">53</span><span class="s">S</span></div>
        <div class="trow"><span>14:56</span><span>5.14</span><span class="v">2</span><span class="b">B</span></div>
      </div>
    </aside>
  </div>

  <div class="watermark">
    <span class="wm-cn">公式指标网</span>
    <svg class="wm-logo" viewBox="0 0 80 80" width="80" height="80">
      <path d="M6 36 A34 34 0 0 1 28 6" fill="none" stroke="#d8644a" stroke-width="9"/>
      <path d="M52 6 A34 34 0 0 1 74 36" fill="none" stroke="#d8644a" stroke-width="9"/>
      <path d="M74 42 A34 34 0 0 1 38 75" fill="none" stroke="#efc83e" stroke-width="9"/>
      <path d="M34 1 H46 V8 L48 14 H53 V40 H50 L52 68 H43 L41 44 H39 L37 68 H28 L30 40 H27 V14 H32 L34 8 Z" fill="#efc83e"/>
      <circle cx="40" cy="6" r="2.500" fill="#7aa7d7"/>
      <path d="M32 24 H48 M32 30 H48 M34 36 H46" stroke="#b8902a" stroke-width="1.200"/>
      <path id="wmarc" d="M3 44 A37 37 0 0 0 32 76" fill="none"/>
      <text class="wm-small"><textPath href="#wmarc">www.9m8.cn</textPath></text>
    </svg>
    <span class="wm-url">www.9m8.cn</span>
  </div>
</div>
</body>
</html>
```

FILE: styles.css
```css
* { box-sizing: border-box; }
html, body { margin: 0; padding: 0; background: #000; }
body {
  width: 1919px;
  height: 974px;
  overflow: hidden;
  color: #bbb;
  font-family: "Liberation Sans", "Noto Sans CJK SC", sans-serif;
  font-size: 12px;
}
.app { position: relative; width: 1919px; height: 974px; display: flex; flex-direction: column; }

/* top bar */
.topbar {
  height: 24px;
  flex: none;
  display: flex;
  align-items: center;
  background: linear-gradient(#0c0c0c, #2b2b2b 65%, #1d1d1d);
  border-bottom: 1px solid #666;
}
.logo { flex: none; margin-top: -2px; }
.navbtns { display: flex; gap: 7px; margin-left: 26px; }
.menu { display: flex; align-items: center; margin-left: 16px; color: #aaa; }
.mi { margin-left: 25px; white-space: nowrap; line-height: 16px; }
.mi:first-child { margin-left: 0; }
.mi.wide { margin-left: 32px; }
.mi.etf { font-size: 10px; }
.topright { display: flex; align-items: center; margin-left: auto; }
.clock { color: #7a1525; margin-right: 5px; }
.week { color: #e02020; margin-right: 4px; }
.qbtns { display: flex; gap: 1px; }
.qb {
  width: 38px;
  height: 18px;
  line-height: 18px;
  text-align: center;
  color: #16164a;
}
.q1 { background: linear-gradient(#f59090, #e86060); }
.q2 { background: linear-gradient(#f0c050, #e8a848); }
.q3 { background: linear-gradient(#f4a090, #ec7468); }
.q4 { background: linear-gradient(#f0ec50, #d8d030); }
.q5 { background: linear-gradient(#f4a878, #ee8060); }
.q6 { background: linear-gradient(#f0d050, #e4b030); }
.q7 { background: linear-gradient(#90d0f8, #60b0e8); }
.winbtns { display: flex; align-items: center; gap: 16px; padding-right: 14px; }
.wmin { margin-left: -2px; }
.xbtn { color: #eee; font-size: 15px; font-weight: bold; margin-left: 6px; }

/* main */
.main { display: flex; flex: 1; min-height: 0; }
.sidetabs { width: 18px; flex: none; border-right: 1px solid #444; }
.vtab {
  writing-mode: vertical-rl;
  text-orientation: upright;
  width: 17px;
  padding: 5px 0;
  font-size: 13px;
  line-height: 17px;
  letter-spacing: -.7px;
  color: #b4b4b4;
  border-bottom: 1px solid #3a3a3a;
}
.vtab.on { background: #a01818; color: #f0f0f0; }

.center { width: 1667px; flex: none; display: flex; flex-direction: column; }
.periodbar {
  height: 20px;
  flex: none;
  display: flex;
  align-items: center;
  border-bottom: 1px solid #444;
  color: #aaa;
}
.panelicon { margin-left: 5px; flex: none; }
.ptabs { display: flex; gap: 9px; margin-left: 6px; padding-left: 3px; border-left: 1px solid #333; height: 100%; align-items: center; }
.ptabs .cur { color: #9fe2f0; }
.tools { display: flex; margin-left: auto; height: 100%; }
.tools span {
  width: 35px;
  text-align: center;
  line-height: 19px;
  border-left: 1px solid #333;
}

.pane { position: relative; flex: none; border-bottom: 1px solid #555; }
.pane-main { height: 611px; }
.pane-sub { height: 304px; border-bottom: 1px solid #333; }
.canvas { position: absolute; left: 0; top: 0; display: block; }

.grid path { fill: none; stroke: #2e2e2e; stroke-width: 1; stroke-dasharray: 1 2; }
.axisline { fill: none; stroke: #3f3f3f; stroke-width: 1; }
.axtext text { fill: #5a5a5a; font-size: 12px; text-anchor: end; }
.wick-up { fill: none; stroke: #8f1228; stroke-width: 2; }
.wick-dn { fill: none; stroke: #881060; stroke-width: 2; }
.purple-body rect { fill: #b820b8; }
.gray-body rect { fill: #a070a8; }
.ma-white { fill: none; stroke: #ffffd8; stroke-width: 1; }
.ma-pink { fill: none; stroke: #b858b0; stroke-width: 1; }
.dot-blue path { fill: #0808d0; stroke: #0808d0; stroke-width: 1.5; }
.dot-cyan { fill: #40f0f0; stroke: #40f0f0; stroke-width: 1; }
.dot-red { fill: #d81818; stroke: #d81818; stroke-width: .8; }
.dot-green { fill: #28e028; stroke: #28e028; stroke-width: 1; }
.arrow-green { fill: #10c820; }
.arrow-red { fill: #ee1010; }
.sig-s text { fill: #38b030; font-size: 16px; font-weight: bold; text-anchor: middle; }
.hand-ico { fill: #f0c47a; }
.peak { fill: #ddd; font-size: 12px; }
.peakline { fill: none; stroke: #ccc; stroke-width: 1; }
.tag-sell text { fill: #d0c894; font-size: 12px; }
.tag-gold text { fill: #9898dc; font-size: 12px; }
.tag-buy { fill: #b02020; font-size: 12px; }
.lbl-purple { fill: #c030c0; font-size: 12px; }
.lbl-yellow { fill: #f0f0b0; font-size: 12px; }
.lbl-teal { fill: #4c9a9a; font-size: 12px; }
.lbl-teal2 { fill: #48a868; font-size: 12px; }
.lbl-gray { fill: #6a6a6a; font-size: 12px; }
.mk-t { font-size: 11px; }
.mk-t.g { fill: #40e080; }
.mk-t.y { fill: #f0d040; }
.mk-t.b { fill: #80d0f0; }
.mk-t.r { fill: #f08090; }
.blue-dots { fill: none; stroke: #10209a; stroke-width: 1; stroke-dasharray: 2 2; }
.ln-white { fill: none; stroke: #fff; stroke-width: 1.2; }
.ln-red { fill: none; stroke: #b01c22; stroke-width: 1.1; }

.inforow {
  position: absolute;
  left: 0;
  top: 1px;
  height: 18px;
  width: 1616px;
  display: flex;
  align-items: center;
  white-space: nowrap;
  color: #ccc;
}
.seg { display: flex; align-items: center; flex: none; height: 100%; }
.seg-a { width: 519px; padding-left: 3px; }
.seg-b { width: 211px; }
.seg-c { width: 359px; }
.seg-d { width: 349px; }
.seg-e { width: 144px; }
.seg-f { gap: 6px; }
.diamond { color: #888; font-size: 12px; }
.title { color: #c0c0c0; }
.dotbtn {
  width: 11px;
  height: 11px;
  flex: none;
  border-radius: 50%;
  margin: 0 5px;
  background: radial-gradient(circle at 50% 40%, #aaa, #666);
}
.dotbtn.first { margin: 0 5px 0 2px; }
.ml0 { margin-left: 0; }
.ml4 { margin-left: 4px; }
.ml5 { margin-left: 5px; }
.ml6 { margin-left: 6px; }
.ml12 { margin-left: 12px; }
.c-pur { color: #b850b8; }
.c-yel { color: #e6e6a8; }
.c-red { color: #b02020; }
.c-cya { color: #9fd8e0; }
.c-blu { color: #0a189a; }
.c-whi { color: #cfcfcf; }
.c-grn { color: #40b060; }
.c-kha { color: #8a8a4a; }
.dn, .up { font-weight: normal; font-size: 17px; line-height: 16px; width: 8px; text-align: center; margin-left: 1px; display: block; overflow: visible; }
.dn { color: #a8e4f0; }
.up { color: #f03030; }
.textrow {
  position: absolute;
  left: 1px;
  top: 20px;
  height: 18px;
  display: flex;
  align-items: center;
}
.sector { color: #e07858; width: 244px; }
.region { color: #e8e8b0; }
.bizline { position: absolute; left: 1px; top: 56px; color: #cc2020; white-space: nowrap; line-height: 16px; }

.pricetag {
  position: absolute;
  left: 1616px;
  top: 54px;
  width: 51px;
  height: 17px;
  line-height: 17px;
  padding-left: 2px;
  background: #000c80;
  color: #d8d8d8;
}

.inforow.sub { top: 0; }
.noterow { position: absolute; left: 0; top: 19px; height: 18px; display: flex; align-items: center; white-space: nowrap; color: #eee; }
.note1 { margin-left: 16px; width: 456px; }

.timeaxis { height: 16px; flex: none; display: flex; align-items: center; position: relative; color: #777; }
.date { width: 78px; height: 16px; line-height: 16px; background: #000a8c; color: #d8d8e8; text-align: center; white-space: nowrap; overflow: hidden; }
.t2 { margin-left: 131px; }
.t3 { margin-left: 308px; }
.t4 { margin-left: 339px; }

/* quote panel */
.quote { width: 234px; flex: none; border-left: 1px solid #444; font-weight: bold; font-size: 13px; letter-spacing: .4px; }
.qhead { height: 26px; display: flex; align-items: center; padding-left: 52px; gap: 5px; font-weight: normal; }
.qhead b { color: #f0f0b8; font-size: 13px; }
.qhead span { color: #c8c8c8; font-size: 16px; letter-spacing: 0; }
.sec { border-top: 1px solid #444; padding-top: 1px; }
.sec.one { height: 20px; padding-top: 0; }
.sec.five { height: 97px; }
.sec.three { height: 61px; padding-top: 1px; }
.qrow { display: grid; grid-template-columns: 60px 54px 60px 58px; align-items: center; height: 19px; }
.prow { display: flex; height: 19px; align-items: center; }
.lab { font-weight: normal; font-size: 16px; letter-spacing: 0; color: #bdbdbd; line-height: 19px; padding-left: 1px; white-space: nowrap; }
.prow .lab { width: 60px; }
.prow .val { width: 54px; }
.prow .vol { margin-left: auto; padding-right: 1px; }
.val { text-align: right; color: #c4c4c4; white-space: nowrap; line-height: 19px; }
.qrow .lab:nth-child(3) { padding-left: 6px; }
.val.red { color: #cc4040; }
.val.grn { color: #2f8f4a; }
.val.grn2 { color: #20a850; }
.val.dim { color: #a83c3c; }
.vol { color: #b8b880; }
.val.vol { color: #b8b490; }
.trades { border-top: 1px solid #444; }
.trow { display: flex; height: 18px; line-height: 18px; color: #b4b4b4; }
.trow span:nth-child(1) { width: 56px; padding-left: 1px; }
.trow span:nth-child(2) { width: 76px; text-align: right; color: #b4b4b4; }
.trow span.p { color: #2f8a3c; }
.trow .v { width: 77px; text-align: right; color: #b0b070; }
.trow .v.big { color: #9a20b0; }
.trow .b, .trow .s { width: 21px; text-align: right; }
.trow .b { color: #c02c2c; }
.trow .s { color: #2f9048; }

/* watermark overlay */
.watermark {
  position: absolute;
  left: 1119px;
  top: 893px;
  width: 800px;
  height: 81px;
  background: #7aa7d7;
  display: flex;
  align-items: center;
  overflow: hidden;
}
.wm-cn {
  margin-left: 18px;
  flex: none;
  font-family: "Noto Sans CJK SC", sans-serif;
  font-weight: 900;
  font-size: 55px;
  line-height: 60px;
  color: #14108e;
  white-space: nowrap;
  -webkit-text-stroke: 1px #14108e;
}
.wm-logo { margin-left: 29px; flex: none; }
.wm-small { font-size: 8px; fill: #fff; font-family: "Liberation Sans", sans-serif; }
.wm-url {
  margin-left: 18px;
  flex: none;
  font-family: "DejaVu Serif", serif;
  font-weight: bold;
  font-size: 53px;
  line-height: 60px;
  color: #fff;
  white-space: nowrap;
  transform: scaleY(1.12);
  margin-top: -4px;
}
```
